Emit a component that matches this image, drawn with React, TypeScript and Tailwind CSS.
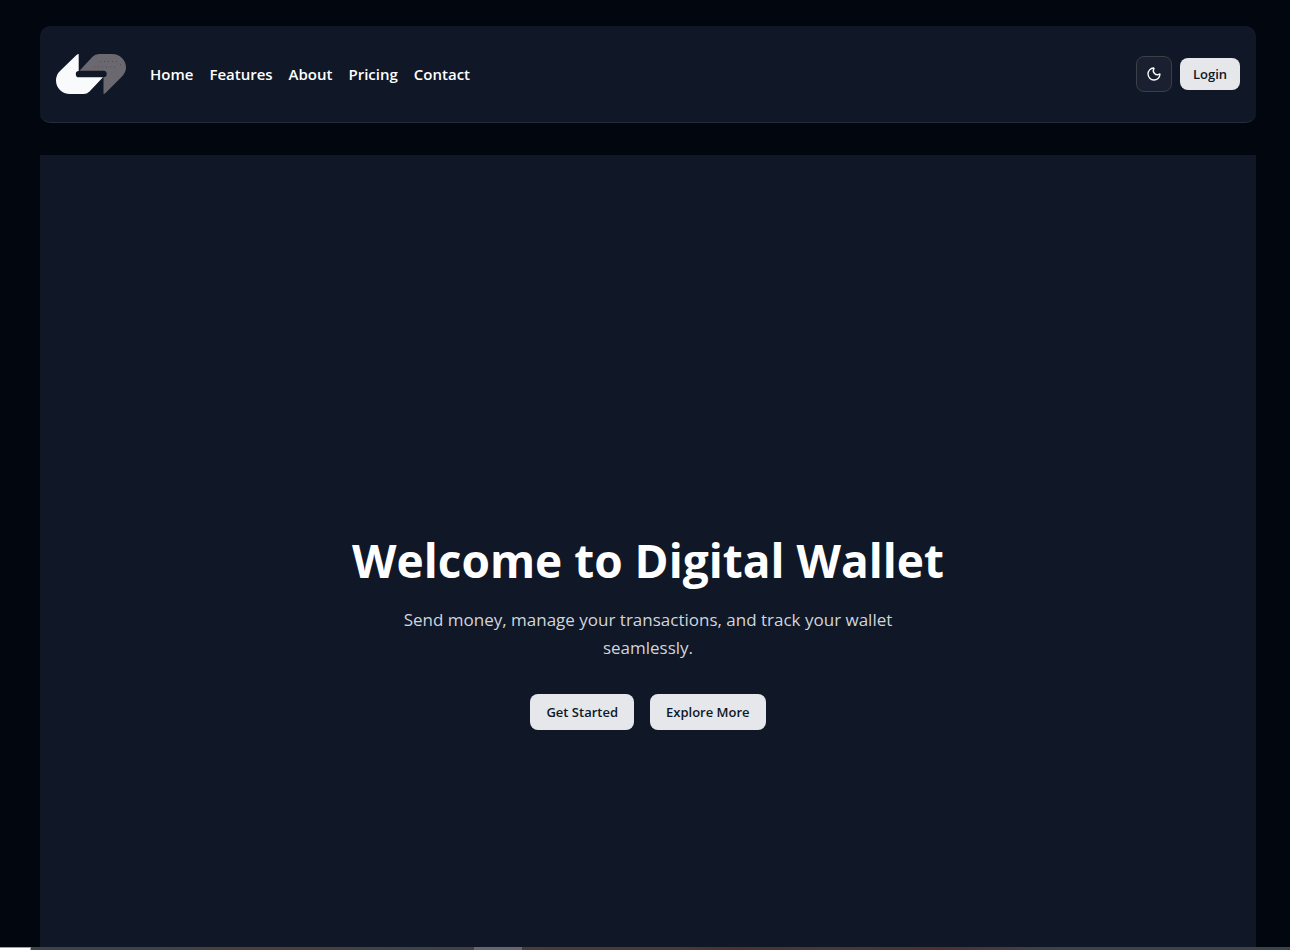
import { Moon } from 'lucide-react';

const navLinks = [
  { label: 'Home', href: '#home' },
  { label: 'Features', href: '#features' },
  { label: 'About', href: '#about' },
  { label: 'Pricing', href: '#pricing' },
  { label: 'Contact', href: '#contact' },
];

function Logo() {
  return (
    <svg width="70" height="40" viewBox="0 0 70 40" aria-hidden="true">
      <path
        d="M22.7 0v16.9a3.2 3.2 0 0 0 .6 6.4H47L33.5 37.4Q31 40 27.5 40H14C6 40 0 34 0 26.500Q0 20.500 4.500 16.500L20.500 1Q21.700 0 22.700 0Z"
        fill="#f8fafc"
      />
      <path
        d="M23.500 16.800L36.500 2.800Q39 0 43 0H56C64 0 70 6 70 13.500Q70 18.500 65.500 23L49.500 39Q48.500 40 47.500 40V23.200a3.200 3.200 0 0 0 0-6.400Z"
        fill="#6b686f"
      />
      <path d="M44 7.500H62M38 13H62M64 10.500h1" stroke="#4f4f5a" strokeWidth="1" strokeDasharray="1 3" />
    </svg>
  );
}

function Navbar() {
  return (
    <header className="flex h-[97px] shrink-0 items-center justify-between rounded-[10px] border-b border-[#252d3b] bg-[#101726] px-4">
      <div className="flex items-center gap-6">
        <a href="#home" aria-label="Digital Wallet">
          <Logo />
        </a>
        <nav className="flex gap-4 text-[15px] leading-6 font-semibold text-white">
          {navLinks.map((link) => (
            <a key={link.label} href={link.href} className="hover:text-gray-300">
              {link.label}
            </a>
          ))}
        </nav>
      </div>

      <div className="flex items-center gap-2">
        <button
          aria-label="Toggle theme"
          className="flex size-9 items-center justify-center rounded-lg border border-[#3a3f48] bg-[#1a202f] text-white"
        >
          <Moon size={16} />
        </button>
        <button className="h-8 min-w-15 rounded-lg bg-gray-200 px-3 text-[13px] leading-5 font-semibold text-[#101726]">
          Login
        </button>
      </div>
    </header>
  );
}

function Hero() {
  return (
    <main className="min-h-0 flex-1 overflow-hidden bg-[#101726]">
      <section className="flex min-h-[955px] flex-col items-center justify-center px-4 text-center">
        <h1 className="mb-[22px] text-[46px] leading-[48px] font-bold text-white">Welcome to Digital Wallet</h1>
        <p className="mb-8 max-w-xl px-8 text-[17px] leading-7 text-gray-300">
          Send money, manage your transactions, and track your wallet seamlessly.
        </p>
        <div className="flex gap-4">
          <button className="h-9 rounded-lg bg-gray-200 px-4 text-[13px] leading-5 font-semibold text-[#101726]">
            Get Started
          </button>
          <button className="h-9 rounded-lg bg-gray-200 px-4 text-[13px] leading-5 font-semibold text-[#101726]">
            Explore More
          </button>
        </div>
      </section>
    </main>
  );
}

// thin edge along the bottom of the window
function BottomEdge() {
  return (
    <div className="flex h-[3px] shrink-0 bg-[linear-gradient(to_right,#3c4448_0%,#3c4448_12%,#523e35_20%,#3c4448_32%,#4b3b36_42%,#4b3b36_52%,#4e3033_57%,#463a38_64%,#4e3033_73%,#3c4448_82%,#3c4448_100%)]">
      <div className="w-[31px] border-t border-r border-gray-400 bg-white" />
      <div className="ml-[443px] w-12 bg-[#69656e]" />
    </div>
  );
}

export default function App() {
  return (
    <div className="flex h-screen flex-col bg-[#02060f] font-['Open_Sans',sans-serif]">
      <div className="flex min-h-0 flex-1 flex-col gap-8 pt-[26px] pr-[34px] pl-10">
        <Navbar />
        <Hero />
      </div>
      <BottomEdge />
    </div>
  );
}
